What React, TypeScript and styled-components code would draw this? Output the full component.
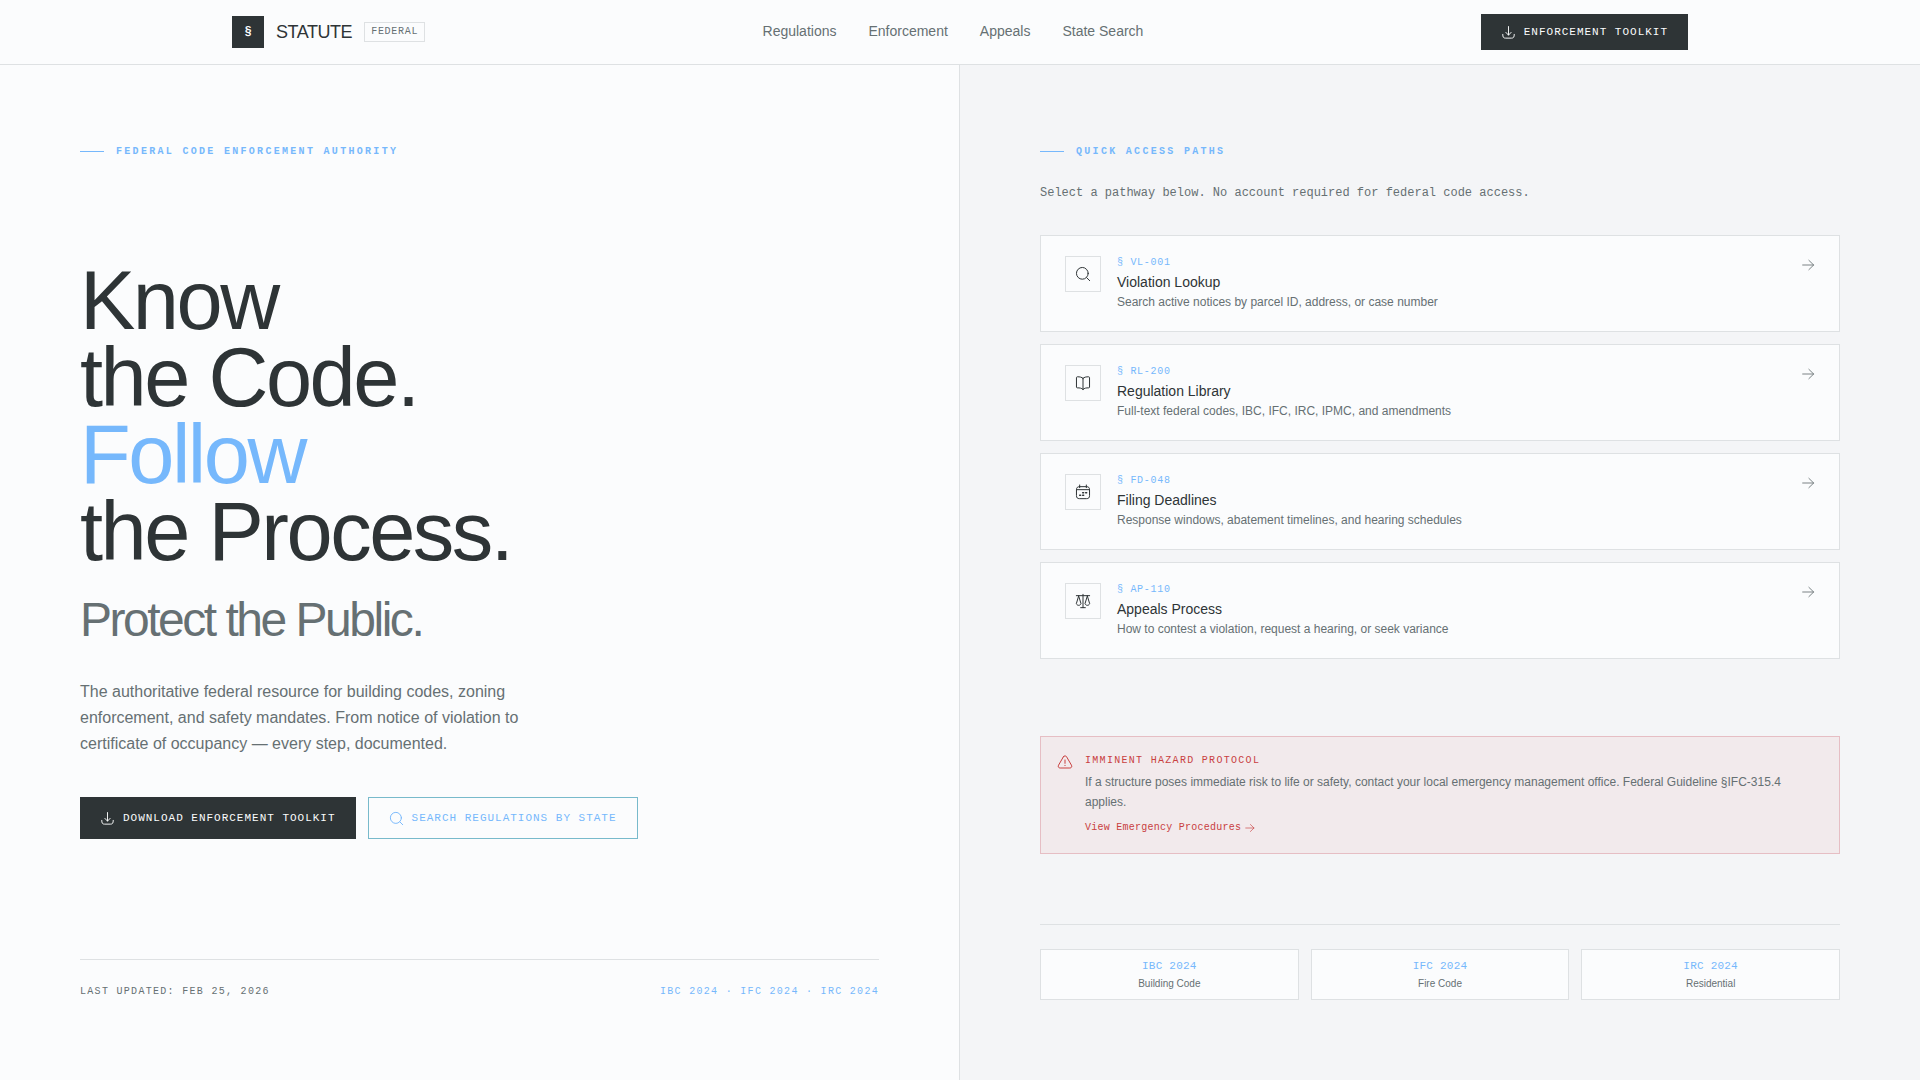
import React from "react";
import styled, { createGlobalStyle } from "styled-components";

const color = {
  ink: "#2e3436",
  muted: "#667073",
  accent: "#76b8fc",
  outline: "#78bacb",
  line: "#dee1e3",
  page: "#fbfcfd",
  panel: "#f4f5f7",
  danger: "#c9403f",
};

const sans = `"Liberation Sans", Arial, sans-serif`;
const mono = `"Liberation Mono", "Courier New", monospace`;

const GlobalStyle = createGlobalStyle`
  *, *::before, *::after { box-sizing: border-box; }
  body { margin: 0; background: ${color.page}; color: ${color.ink}; font-family: ${sans}; }
  h1, h2, h3, p, ul { margin: 0; padding: 0; font-weight: 400; }
  ul { list-style: none; }
  a { color: inherit; text-decoration: none; }
`;

const Page = styled.div`
  min-height: 100vh;
  display: flex;
  flex-direction: column;
`;

const Header = styled.header`
  border-bottom: 1px solid ${color.line};
`;

const HeaderInner = styled.div`
  max-width: 1536px;
  height: 64px;
  margin: 0 auto;
  padding: 0 40px;
  display: flex;
  align-items: center;
  justify-content: space-between;
`;

const Brand = styled.a`
  display: flex;
  align-items: center;
  gap: 12px;
`;

const BrandMark = styled.span`
  width: 32px;
  height: 32px;
  display: grid;
  place-items: center;
  background: ${color.ink};
  color: ${color.page};
  font: 700 12px ${mono};
`;

const BrandName = styled.span`
  font-size: 18px;
  letter-spacing: -0.025em;
`;

const BrandTag = styled.span`
  padding: 2px 6px;
  border: 1px solid ${color.line};
  color: ${color.muted};
  font: 10px/14px ${mono};
  letter-spacing: 0.07em;
`;

const Nav = styled.nav`
  display: flex;
  gap: 32px;
  color: ${color.muted};
  font-size: 14px;
  line-height: 16px;
  padding-bottom: 2px;
`;

const Button = styled.button<{ $outline?: boolean; $tall?: boolean }>`
  height: ${(p) => (p.$tall ? 42 : 36)}px;
  padding: 0 20px;
  display: inline-flex;
  align-items: center;
  gap: 8px;
  border: ${(p) => (p.$outline ? `1px solid ${color.outline}` : "0")};
  background: ${(p) => (p.$outline ? "transparent" : color.ink)};
  color: ${(p) => (p.$outline ? color.accent : color.page)};
  font: 11px ${mono};
  letter-spacing: 0.09em;
  text-transform: uppercase;
  cursor: pointer;
`;

const Main = styled.main`
  flex: 1;
  display: grid;
  grid-template-columns: 1fr 1fr;
`;

const Column = styled.section<{ $panel?: boolean }>`
  padding: 80px;
  display: flex;
  flex-direction: column;
  justify-content: space-between;
  background: ${(p) => (p.$panel ? color.panel : color.page)};
  border-right: ${(p) => (p.$panel ? "0" : `1px solid ${color.line}`)};
`;

const Eyebrow = styled.h2`
  display: flex;
  align-items: center;
  gap: 12px;
  color: ${color.accent};
  font: 700 10px/13px ${mono};
  letter-spacing: 0.23em;
  text-transform: uppercase;

  &::before {
    content: "";
    width: 24px;
    height: 1px;
    background: ${color.accent};
  }
`;

const Hero = styled.div`
  padding-bottom: 16px;
`;

const Headline = styled.h1`
  font-size: 83px;
  line-height: 77px;
  letter-spacing: -0.03em;
`;

const Line = styled.span<{ $accent?: boolean }>`
  display: block;
  color: ${(p) => (p.$accent ? color.accent : color.ink)};
`;

const Tagline = styled.span`
  display: block;
  margin-top: 23px;
  color: ${color.muted};
  font-size: 48px;
  line-height: 54px;
`;

const Lead = styled.p`
  max-width: 448px;
  margin-top: 32px;
  color: ${color.muted};
  font-size: 16px;
  line-height: 26px;
`;

const Actions = styled.div`
  margin-top: 40px;
  display: flex;
  flex-wrap: wrap;
  gap: 12px;
`;

const MetaRow = styled.div`
  padding-top: 24px;
  border-top: 1px solid ${color.line};
  display: flex;
  justify-content: space-between;
  color: ${color.muted};
  font: 10px/16px ${mono};
  letter-spacing: 0.13em;
`;

const MetaCodes = styled.span`
  color: ${color.accent};
`;

const Access = styled.div`
  padding-bottom: 6px;
`;

const AccessNote = styled.p`
  margin: 25px 0 32px;
  color: ${color.muted};
  font: 12px/20px ${mono};
`;

const CardList = styled.ul`
  display: flex;
  flex-direction: column;
  gap: 12px;
`;

const Card = styled.a`
  padding: 20px 24px;
  display: flex;
  align-items: flex-start;
  gap: 16px;
  border: 1px solid ${color.line};
  background: ${color.page};
`;

const IconBox = styled.span`
  width: 36px;
  height: 36px;
  display: grid;
  place-items: center;
  border: 1px solid ${color.line};
`;

const CardBody = styled.div`
  flex: 1;
`;

const CardCode = styled.p`
  margin-bottom: 2px;
  color: ${color.accent};
  font: 10px/14px ${mono};
  letter-spacing: 0.07em;
`;

const CardTitle = styled.h3`
  font-size: 14px;
  line-height: 21px;
`;

const CardText = styled.p`
  color: ${color.muted};
  font-size: 12px;
  line-height: 18px;
`;

const CardArrow = styled.span`
  padding-top: 1px;
  display: flex;
  color: ${color.muted};
`;

const Alert = styled.aside`
  padding: 16px 16px 19px;
  display: flex;
  gap: 12px;
  border: 1px solid #e6bec4;
  background: #f2eaec;
  color: ${color.danger};

  > svg { flex: none; margin-top: 1px; }
`;

const AlertTitle = styled.h3`
  margin-bottom: 3px;
  font: 10px/16px ${mono};
  letter-spacing: 0.13em;
`;

const AlertText = styled.p`
  color: ${color.muted};
  font-size: 12px;
  line-height: 20px;
`;

const AlertLink = styled.a`
  margin-top: 10px;
  display: flex;
  align-items: center;
  gap: 2px;
  font: 10px/12px ${mono};
  letter-spacing: 0.025em;
`;

const Editions = styled.ul`
  padding-top: 24px;
  border-top: 1px solid ${color.line};
  display: grid;
  grid-template-columns: repeat(3, 1fr);
  gap: 12px;
`;

const Edition = styled.li`
  padding: 10px 10px 8px;
  border: 1px solid ${color.line};
  background: ${color.page};
  text-align: center;
`;

const EditionCode = styled.p`
  margin-bottom: 4px;
  color: ${color.accent};
  font: 11px/13px ${mono};
  letter-spacing: 0.02em;
`;

const EditionName = styled.p`
  color: ${color.muted};
  font-size: 10px;
  line-height: 14px;
`;

const icons = {
  download: (
    <>
      <path d="M12 2.500v13.500M7.800 11.800 12 16.200l4.200-4.400" />
      <path d="M2.800 15c0 4.500 1 6 4.500 6h9.400c3.500 0 4.500-1.500 4.500-6" />
    </>
  ),
  search: (
    <>
      <circle cx="11" cy="11" r="8.800" />
      <path d="m17.500 17.500 4.500 4.500" />
    </>
  ),
  book: (
    <path d="M12 5C10.500 3.200 7 2.600 3.500 2.700c-.8 0-1.300.5-1.300 1.300v14c0 .8.500 1.300 1.300 1.300 3.500-.1 6.500.3 8.500 2.500 2-2.200 5-2.600 8.500-2.500.8 0 1.300-.5 1.300-1.300V4c0-.8-.5-1.300-1.300-1.300C17 2.600 13.500 3.200 12 5Zm0 0v17" />
  ),
  calendar: (
    <>
      <path d="M7 1.500v4M17 1.500v4M2.500 8.500h19" />
      <path d="M7 4h10c3.500 0 4.800 1.300 4.800 4.800v8.400c0 3.500-1.300 4.800-4.800 4.800H7c-3.500 0-4.800-1.300-4.800-4.800V8.800C2.200 5.300 3.500 4 7 4Z" />
      <path d="M11.500 13h1.500M16 13h1.500M7 17h1.500M11.500 17h1.500" strokeWidth="2.200" />
    </>
  ),
  scale: (
    <>
      <path d="M12 2v20M8.500 22h7M2 4h20" />
      <path d="M5.500 4.500 2 16c.8 1.800 2 2.500 3.500 2.500S8.200 17.800 9 16L5.500 4.500ZM18.500 4.500 15 16c.8 1.800 2 2.500 3.500 2.500s2.700-.7 3.500-2.500L18.500 4.500Z" />
    </>
  ),
  arrow: <path d="M5.500 12H22M14.800 5l7.200 7-7.200 7" strokeWidth="1.300" />,
  warning: (
    <>
      <path d="M9.600 4.200 2.300 16.800c-1.100 2.200-.2 4.200 2.400 4.200h14.600c2.600 0 3.500-2 2.400-4.200L14.400 4.200c-1.200-2-3.600-2-4.800 0Z" />
      <path d="M12 9v5M12 17v.4" />
    </>
  ),
};

function Icon({ name, size = 16 }: { name: keyof typeof icons; size?: number }) {
  return (
    <svg
      width={size}
      height={size}
      viewBox="0 0 24 24"
      fill="none"
      stroke="currentColor"
      strokeWidth={1.5}
      strokeLinecap="round"
      strokeLinejoin="round"
      aria-hidden="true"
    >
      {icons[name]}
    </svg>
  );
}

const links = ["Regulations", "Enforcement", "Appeals", "State Search"];

const paths: { icon: keyof typeof icons; code: string; title: string; text: string }[] = [
  { icon: "search", code: "§ VL-001", title: "Violation Lookup", text: "Search active notices by parcel ID, address, or case number" },
  { icon: "book", code: "§ RL-200", title: "Regulation Library", text: "Full-text federal codes, IBC, IFC, IRC, IPMC, and amendments" },
  { icon: "calendar", code: "§ FD-048", title: "Filing Deadlines", text: "Response windows, abatement timelines, and hearing schedules" },
  { icon: "scale", code: "§ AP-110", title: "Appeals Process", text: "How to contest a violation, request a hearing, or seek variance" },
];

const editions = [
  ["IBC 2024", "Building Code"],
  ["IFC 2024", "Fire Code"],
  ["IRC 2024", "Residential"],
];

export default function App() {
  return (
    <Page>
      <GlobalStyle />
      <Header>
        <HeaderInner>
          <Brand href="#">
            <BrandMark>§</BrandMark>
            <BrandName>STATUTE</BrandName>
            <BrandTag>FEDERAL</BrandTag>
          </Brand>
          <Nav>
            {links.map((label) => (
              <a key={label} href="#">{label}</a>
            ))}
          </Nav>
          <Button type="button">
            <Icon name="download" size={15} />
            Enforcement Toolkit
          </Button>
        </HeaderInner>
      </Header>
      <Main>
        <Column>
          <Eyebrow>Federal Code Enforcement Authority</Eyebrow>
          <Hero>
            <Headline>
              <Line>Know</Line>
              <Line>the Code.</Line>
              <Line $accent>Follow</Line>
              <Line>the Process.</Line>
              <Tagline>Protect the Public.</Tagline>
            </Headline>
            <Lead>
              The authoritative federal resource for building codes, zoning enforcement, and safety
              mandates. From notice of violation to certificate of occupancy — every step, documented.
            </Lead>
            <Actions>
              <Button type="button" $tall>
                <Icon name="download" size={15} />
                Download Enforcement Toolkit
              </Button>
              <Button type="button" $tall $outline>
                <Icon name="search" size={15} />
                Search Regulations by State
              </Button>
            </Actions>
          </Hero>
          <MetaRow>
            <span>LAST UPDATED: FEB 25, 2026</span>
            <MetaCodes>IBC 2024 · IFC 2024 · IRC 2024</MetaCodes>
          </MetaRow>
        </Column>
        <Column $panel>
          <Access>
            <Eyebrow>Quick Access Paths</Eyebrow>
            <AccessNote>Select a pathway below. No account required for federal code access.</AccessNote>
            <CardList>
              {paths.map((p) => (
                <li key={p.code}>
                  <Card href="#">
                    <IconBox>
                      <Icon name={p.icon} />
                    </IconBox>
                    <CardBody>
                      <CardCode>{p.code}</CardCode>
                      <CardTitle>{p.title}</CardTitle>
                      <CardText>{p.text}</CardText>
                    </CardBody>
                    <CardArrow>
                      <Icon name="arrow" />
                    </CardArrow>
                  </Card>
                </li>
              ))}
            </CardList>
          </Access>
          <Alert>
            <Icon name="warning" />
            <div>
              <AlertTitle>IMMINENT HAZARD PROTOCOL</AlertTitle>
              <AlertText>
                If a structure poses immediate risk to life or safety, contact your local emergency
                management office. Federal Guideline §IFC-315.4 applies.
              </AlertText>
              <AlertLink href="#">
                View Emergency Procedures
                <Icon name="arrow" size={12} />
              </AlertLink>
            </div>
          </Alert>
          <Editions>
            {editions.map(([code, name]) => (
              <Edition key={code}>
                <EditionCode>{code}</EditionCode>
                <EditionName>{name}</EditionName>
              </Edition>
            ))}
          </Editions>
        </Column>
      </Main>
    </Page>
  );
}
